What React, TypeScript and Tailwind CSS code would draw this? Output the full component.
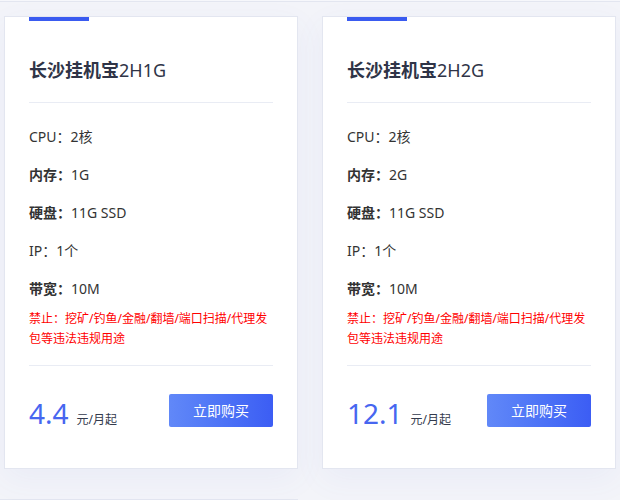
import React from 'react'

interface Plan {
  name: string
  spec: string
  cpu: string
  mem: string
  disk: string
  ip: string
  bw: string
  price: string
}

const plans: Plan[] = [
  { name: '长沙挂机宝', spec: '2H1G', cpu: '2核', mem: '1G', disk: '11G SSD', ip: '1个', bw: '10M', price: '4.4' },
  { name: '长沙挂机宝', spec: '2H2G', cpu: '2核', mem: '2G', disk: '11G SSD', ip: '1个', bw: '10M', price: '12.1' },
]

const font = { fontFamily: '"Noto Sans", "Noto Sans CJK SC", sans-serif' }

function PlanCard({ plan }: { plan: Plan }) {
  return (
    <div className="w-[294px] h-[453px] bg-white border border-[#e3e6f0] shadow-[0_10px_30px_rgba(90,110,200,0.06)] px-[24px] flex flex-col">
      <div className="w-[60px] h-[4px] bg-[#3a5bf0]" />
      <h3 className="mt-[37px] text-[18px] leading-[24px] text-[#2f3447]">
        <span className="font-bold">{plan.name}</span>
        <span>{plan.spec}</span>
      </h3>
      <div className="mt-[20px] h-px bg-[#e9ecf4]" />
      <ul className="mt-[24px] flex flex-col gap-[18px] text-[14px] leading-[20px] text-[#333]">
        <li>CPU：{plan.cpu}</li>
        <li><span className="font-bold">内存：</span>{plan.mem}</li>
        <li><span className="font-bold">硬盘：</span>{plan.disk}</li>
        <li>IP：{plan.ip}</li>
        <li><span className="font-bold">带宽：</span>{plan.bw}</li>
      </ul>
      <p className="mt-[10px] text-[12px] leading-[20px] text-[#ff0000]">
        禁止：挖矿/钓鱼/金融/翻墙/端口扫描/代理发包等违法违规用途
      </p>
      <div className="mt-[16px] h-px bg-[#e9ecf4]" />
      <div className="mt-[26px] flex items-center justify-between">
        <div className="flex items-baseline gap-[8px] pt-[5px]">
          <span className="text-[28px] leading-[32px] text-[#4766f0]">{plan.price}</span>
          <span className="text-[12px] text-[#333a4d]">元/月起</span>
        </div>
        <button className="w-[104px] h-[33px] rounded-[2px] bg-gradient-to-r from-[#6188f8] to-[#3c5df4] text-white text-[14px]">
          立即购买
        </button>
      </div>
    </div>
  )
}

export default function App() {
  return (
    <div className="w-[620px] h-[500px] overflow-hidden bg-[#f3f4f9]" style={font}>
      <div className="h-[2px] bg-[#f6f7fb] border-b border-[#e3e6f0]" />
      <div className="mt-[14px] pl-[4px] flex gap-[24px]">
        {plans.map((p) => (
          <PlanCard key={p.spec} plan={p} />
        ))}
      </div>
      <div className="mt-[30px] w-[298px] h-[20px] bg-white border-t border-[#e3e6f0]" />
    </div>
  )
}
